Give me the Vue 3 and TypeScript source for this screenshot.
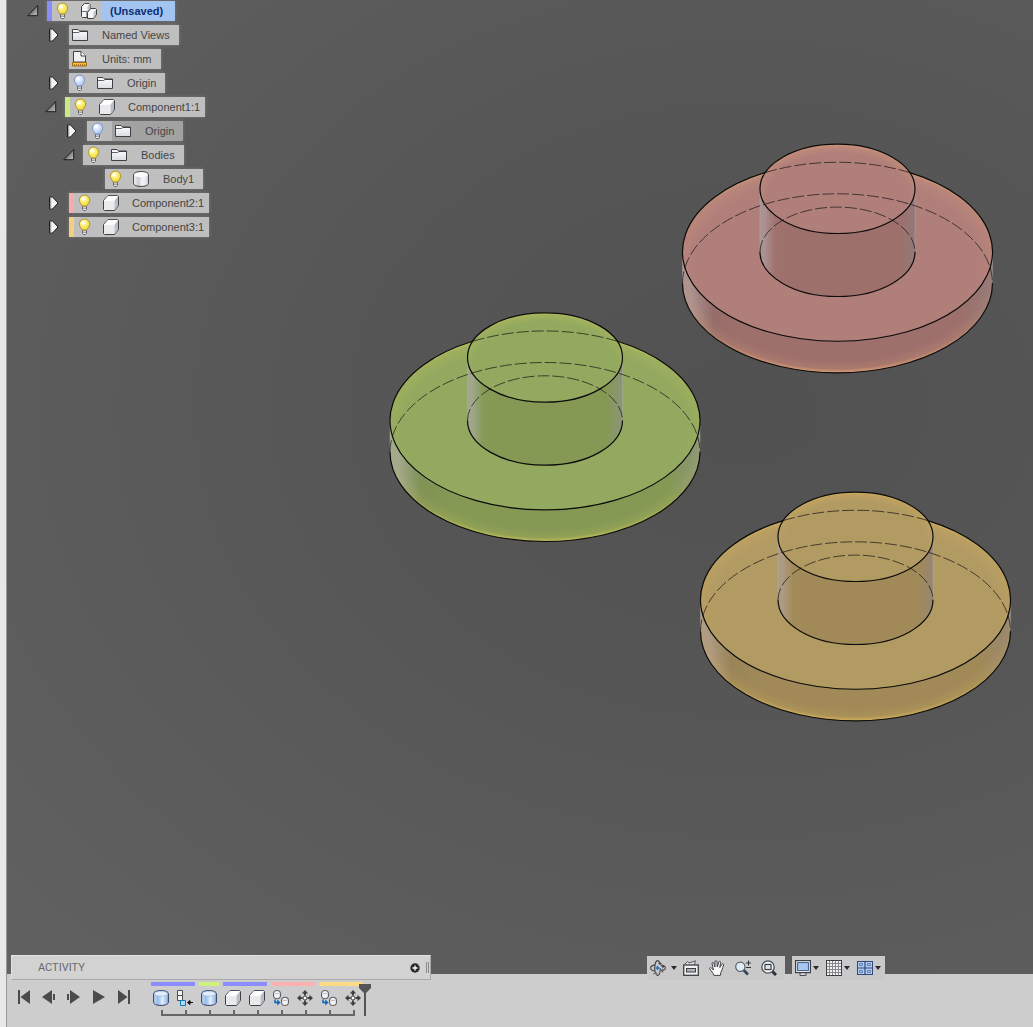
<script setup lang="ts">
import { ref } from 'vue'

interface TreeRow {
  label: string
  indent: number
  arrow?: 'open' | 'closed'
  stripe?: string
  bulb?: 'bulb-on' | 'bulb-off'
  icon: string
  kind?: 'root' | 'component' | 'dimmed'
}

const rows = ref<TreeRow[]>([
  { label: '(Unsaved)', indent: 19, arrow: 'open', stripe: 'violet', bulb: 'bulb-on', icon: 'assembly', kind: 'root' },
  { label: 'Named Views', indent: 41, arrow: 'closed', icon: 'folder' },
  { label: 'Units: mm', indent: 41, icon: 'units' },
  { label: 'Origin', indent: 41, arrow: 'closed', bulb: 'bulb-off', icon: 'folder' },
  { label: 'Component1:1', indent: 37, arrow: 'open', stripe: 'green', bulb: 'bulb-on', icon: 'cube', kind: 'component' },
  { label: 'Origin', indent: 59, arrow: 'closed', bulb: 'bulb-off', icon: 'folder', kind: 'dimmed' },
  { label: 'Bodies', indent: 55, arrow: 'open', bulb: 'bulb-on', icon: 'folder' },
  { label: 'Body1', indent: 77, bulb: 'bulb-on', icon: 'body' },
  { label: 'Component2:1', indent: 41, arrow: 'closed', stripe: 'pink', bulb: 'bulb-on', icon: 'cube', kind: 'component' },
  { label: 'Component3:1', indent: 41, arrow: 'closed', stripe: 'orange', bulb: 'bulb-on', icon: 'cube', kind: 'component' },
])

const parts = [
  { id: 'p1', x: 538, y: 420.5, face: '#93a95f', side: '#859955', light: '#a0a78c', shade: '#8b9478', glow: '#cfc95a' },
  { id: 'p2', x: 830.5, y: 251.8, face: '#b07f7a', side: '#9e706c', light: '#ab918f', shade: '#927977', glow: '#e8ab76' },
  { id: 'p3', x: 848.5, y: 599.8, face: '#b29a63', side: '#a18a58', light: '#ad9a82', shade: '#978670', glow: '#e2b95c' },
]

const playback = [
  { icon: 'to-start', label: 'Go to beginning' },
  { icon: 'step-back', label: 'Step back' },
  { icon: 'step-forward', label: 'Step forward' },
  { icon: 'play', label: 'Play' },
  { icon: 'to-end', label: 'Go to end' },
]

const groups = [
  { color: 'violet', features: ['extrude', 'new-component'] },
  { color: 'green', features: ['extrude'] },
  { color: 'violet', features: ['cube', 'cube'] },
  { color: 'pink', features: ['copy', 'move'] },
  { color: 'orange', features: ['copy', 'move'] },
]

const navTools = [
  { icon: 'orbit', label: 'Orbit', menu: true },
  { icon: 'look-at', label: 'Look at', menu: false },
  { icon: 'hand', label: 'Pan', menu: false },
  { icon: 'zoom', label: 'Zoom', menu: false },
  { icon: 'fit', label: 'Fit', menu: false },
]
const viewTools = [
  { icon: 'monitor', label: 'Display settings', menu: true },
  { icon: 'grid', label: 'Grid and snaps', menu: true },
  { icon: 'viewports', label: 'Viewports', menu: true },
]
</script>

<template>
  <div class="app">
    <svg class="sprites" width="0" height="0" aria-hidden="true">
      <defs>
        <radialGradient id="g-on" cx=".4" cy=".35" r=".65">
          <stop offset="0" stop-color="#fffde0" /><stop offset=".45" stop-color="#fcef78" /><stop offset="1" stop-color="#f2d83a" />
        </radialGradient>
        <radialGradient id="g-off" cx=".4" cy=".35" r=".65">
          <stop offset="0" stop-color="#ffffff" /><stop offset=".5" stop-color="#d3e1fb" /><stop offset="1" stop-color="#a9c3f0" />
        </radialGradient>
        <linearGradient id="g-folder" x1="0" y1="0" x2="0" y2="1">
          <stop offset="0" stop-color="#ffffff" /><stop offset="1" stop-color="#d9dce0" />
        </linearGradient>
        <linearGradient id="g-white"><stop offset="0" stop-color="#fff" /><stop offset=".3" stop-color="#c9cdd3" /><stop offset=".6" stop-color="#f6f6f8" /><stop offset="1" stop-color="#d8dbe0" /></linearGradient>
        <linearGradient id="g-blue"><stop offset="0" stop-color="#c3d9f5" /><stop offset=".3" stop-color="#9abde9" /><stop offset=".6" stop-color="#e2effc" /><stop offset="1" stop-color="#8aafe0" /></linearGradient>
        <linearGradient id="g-tri" x1="0" y1="0" x2="1" y2="1"><stop offset="0" stop-color="#3c3c3c" /><stop offset="1" stop-color="#c4c4c4" /></linearGradient>
      </defs>

      <symbol id="open" viewBox="0 0 21 14">
        <path d="M1.800 11.700 11.700 1.500V11.700Z" fill="url(#g-tri)" stroke="#1c1c1c" />
      </symbol>
      <symbol id="closed" viewBox="0 0 21 14">
        <path d="M1.500 1H4.500L10 7 4.500 13H1.500Z" fill="#f4f4f4" stroke="#1f1f1f" />
        <path d="M2.700 1.500V12.500" stroke="#8f8f8f" />
      </symbol>
      <symbol id="bulb-on" viewBox="0 0 20 20">
        <path d="M8.500 13h4v3.500l-1 1h-2l-1-1z" fill="#e9ebef" stroke="#5b6170" />
        <path d="M8.500 15.200h4" stroke="#7b8190" />
        <path d="M10.500 2a5.200 5.200 0 0 1 5.200 5.200c0 2.500-2 3.600-2.800 5.800H8.100C7.300 10.800 5.300 9.700 5.300 7.200A5.200 5.200 0 0 1 10.500 2z" fill="url(#g-on)" stroke="#b1942c" />
        <circle cx="9" cy="5.800" r="1.700" fill="#fff" opacity=".9" />
      </symbol>
      <symbol id="bulb-off" viewBox="0 0 20 20">
        <path d="M8.500 13h4v3.500l-1 1h-2l-1-1z" fill="#e9ebef" stroke="#5b6170" />
        <path d="M8.500 15.200h4" stroke="#7b8190" />
        <path d="M10.500 2a5.200 5.200 0 0 1 5.200 5.200c0 2.500-2 3.600-2.800 5.800H8.100C7.300 10.800 5.300 9.700 5.300 7.200A5.200 5.200 0 0 1 10.500 2z" fill="url(#g-off)" stroke="#7f93c0" />
        <circle cx="9" cy="5.800" r="1.700" fill="#fff" opacity=".9" />
      </symbol>
      <symbol id="folder" viewBox="0 0 16 16">
        <path d="M.5 13.500V2.500h5.500L7.500 4H15.500v9.500z" fill="url(#g-folder)" stroke="#3c4148" />
        <path d="M1 5.500H6.500L8 4.500" fill="none" stroke="#5d6269" />
        <path d="M8 4.500h7" stroke="#3c4148" />
      </symbol>
      <symbol id="units" viewBox="0 0 16 16">
        <path d="M1.500 11V.5H9L13.500 5v6z" fill="#eef0f2" stroke="#3c4148" />
        <path d="M9 .5V5h4.500" fill="#fff" stroke="#3c4148" />
        <path d="M.5 11.500h14v3.500H.5z" fill="#f5c04a" stroke="#a86c10" />
        <path d="M2.500 13v2M4.500 13v2M6.500 13v2M8.500 13v2M10.500 13v2M12.500 13v2" stroke="#a86c10" stroke-width=".8" />
      </symbol>
      <symbol id="cube" viewBox="0 0 16 16">
        <path d="M.5 5.500 5 .6H14.500l1 1V10.500L11.500 15.500H1.500l-1-1z" fill="#f7f7f8" stroke="#3c4148" />
        <path d="M11.500 5.500 15 1.200V10.500L11.500 15z" fill="#b9bdc4" />
        <path d="M1 5.500 5 1.100h9.600l-3.300 4.400z" fill="#fff" />
        <path d="M1 6H11v9H1.500L1 14.500z" fill="#e9eaec" />
      </symbol>
      <symbol id="assembly" viewBox="0 0 16 16">
        <path d="M.5 3.500 3.500.5H8l1 1V6.500L6 9.500V14.500H1.500l-1-1z" fill="#f4f5f6" stroke="#3c4148" />
        <path d="M6.500 9.500 9.500 5.500H14.500l1 1V11.500L12.500 15.500H6.500z" fill="#f4f5f6" stroke="#3c4148" />
        <path d="M1 8.500h5" stroke="#6a6f77" />
        <path d="M6.500 3.500 8.500 1.500V6L6.500 8.500zM12.500 9.500 15 6.800V11.300L12.500 14.800z" fill="#bfc3c9" />
      </symbol>
      <symbol id="body" viewBox="0 0 16 16">
        <path d="M.6 4C.6 1.800 3.500.6 8 .6s7.400 1.200 7.400 3.400v8c0 2.200-2.900 3.400-7.400 3.400S.6 14.200.6 12z" fill="url(#g-white)" stroke="#3c4148" />
        <ellipse cx="8" cy="3.700" rx="6.600" ry="2.400" fill="#fbfbfc" />
      </symbol>
      <symbol id="extrude" viewBox="0 0 16 16">
        <path d="M.6 4C.6 1.800 3.500.6 8 .6s7.400 1.200 7.400 3.400v8c0 2.200-2.900 3.400-7.400 3.400S.6 14.200.6 12z" fill="url(#g-blue)" stroke="#2d3f63" />
        <ellipse cx="8" cy="3.700" rx="6.600" ry="2.400" fill="#e2eefb" stroke="#9ab4d9" stroke-width=".6" />
      </symbol>
      <symbol id="new-component" viewBox="0 0 16 16">
        <path d="M.5.5h5v5h-5zM.5 5.500h5v5h-5z" fill="#f4f4f5" stroke="#494d54" />
        <path d="M3.500 10.500h5v5h-5z" fill="#a9dcf6" stroke="#1577b8" />
        <path d="M11 12.500h5M13 10.500l-2.500 2 2.500 2z" fill="#111" stroke="#111" />
      </symbol>
      <symbol id="copy" viewBox="0 0 16 16">
        <rect x=".6" y=".6" width="6.800" height="8" rx="2.600" fill="#f3f3f4" stroke="#494d54" />
        <path d="M1.500 3c1.500 1 3.500 1 5 0" fill="none" stroke="#a3a7ad" stroke-width=".8" />
        <rect x="8.600" y="7.400" width="6.800" height="8" rx="2.600" fill="#f3f3f4" stroke="#494d54" />
        <path d="M9.500 9.800c1.500 1 3.500 1 5 0" fill="none" stroke="#a3a7ad" stroke-width=".8" />
        <path d="M2 9.500v3H5" fill="none" stroke="#0b67b8" stroke-width="1.500" />
        <path d="M4.200 9.600 7.600 12.500 4.200 15.400z" fill="#0b67b8" />
      </symbol>
      <symbol id="move" viewBox="0 0 16 16">
        <path d="M8 0 11.200 3.500H4.800zM8 16l3.200-3.500H4.800zM0 8l3.500-3.200v6.400zM16 8l-3.500-3.200v6.400z" fill="#3e4045" />
        <path d="M8 2.500v3M8 10.500v3M2.500 8h3M10.500 8h3" stroke="#3e4045" stroke-width="2" />
        <circle cx="8" cy="8" r="2" fill="#fff" stroke="#3e4045" />
      </symbol>

      <symbol id="to-start" viewBox="0 0 14 14"><path d="M1 0h2v14H1zM13 0v14L3.500 7z" fill="#4b4b4b" /></symbol>
      <symbol id="step-back" viewBox="0 0 14 14"><path d="M10 0v14L0 7zM11 4h2v6h-2z" fill="#4b4b4b" /></symbol>
      <symbol id="step-forward" viewBox="0 0 14 14"><path d="M3 0v14l10-7zM0 4h2v6H0z" fill="#4b4b4b" /></symbol>
      <symbol id="play" viewBox="0 0 14 14"><path d="M1 0v14l12-7z" fill="#4b4b4b" /></symbol>
      <symbol id="to-end" viewBox="0 0 14 14"><path d="M11 0h2v14h-2zM1 0v14l9.500-7z" fill="#4b4b4b" /></symbol>

      <symbol id="orbit" viewBox="0 0 16 16">
        <path d="M5.500 11.200C2.500 10.800.6 9.600.6 8c0-1.600 1.900-2.700 4.700-3.100M10.500 4.900c2.900.3 4.900 1.500 4.900 3.100 0 1.200-1.200 2.100-3 2.600" fill="none" stroke="#44484f" stroke-width="1.100" />
        <path d="M5 11.500C4.800 10.500 4.700 9.300 4.700 8c0-4.200 1.200-7.400 2.800-7.400 1 0 1.900 1.100 2.400 3M10.300 8c0 4.200-1.200 7.400-2.800 7.400-.8 0-1.500-.7-2-2" fill="none" stroke="#44484f" stroke-width="1.100" />
        <path d="M13 8.800 11 10.700l2.300 1.500M3.600 14.200l1.600-1.900 2 1.300" fill="none" stroke="#44484f" />
        <path d="M7.500 6v4M5.500 8h4" stroke="#1873c4" stroke-width="1.400" />
        <path d="M8.500 3.500h3M10 2v3M11.500 6.500h3M13 5v3" stroke="#44484f" />
      </symbol>
      <symbol id="look-at" viewBox="0 0 16 16">
        <path d="M1.500 4.500 4.500 1.500 6 3 12.500.8 11.500 4.500" fill="#dcdcdc" stroke="#555a61" />
        <rect x=".7" y="5" width="14.600" height="10.300" fill="#f1f1f1" stroke="#3c4046" stroke-width="1.300" />
        <rect x="3.500" y="8.500" width="9" height="3.500" fill="#aeb3b9" stroke="#3c4046" />
      </symbol>
      <symbol id="hand" viewBox="0 0 16 16">
        <path d="M5 15.400C4.300 13 1.800 10.800.7 8.800c-.4-1 .9-1.600 1.900-.7L4.500 10 3 3.500c-.2-1.200 1.300-1.500 1.700-.4L6 7 6 1.600C6.100.3 7.800.3 7.900 1.600L8.300 7 9.800 2c.4-1.200 2-.8 1.800.4L10.800 7.500l2.200-3.300c.7-1 2-.3 1.600.8-1.300 3.500-1.500 5.500-2.800 7.500l-.4 2.900z" fill="#fafafa" stroke="#3e4248" />
      </symbol>
      <symbol id="zoom" viewBox="0 0 16 16">
        <path d="m8.500 10 4.500 4.500" stroke="#31445f" stroke-width="2.600" />
        <circle cx="5.300" cy="6.800" r="4.600" fill="#dcecf2" stroke="#5a6068" stroke-width="1.200" />
        <path d="M11 3h5M13.500.5v5M11 7.500h5" stroke="#333" />
      </symbol>
      <symbol id="fit" viewBox="0 0 16 16">
        <path d="m10.500 10.500 4.500 4.500" stroke="#2e3238" stroke-width="3" />
        <circle cx="7" cy="7" r="6.200" fill="#ececec" stroke="#4c5157" stroke-width="1.300" />
        <rect x="4" y="4.500" width="6" height="5" fill="#d9ecf0" stroke="#3d4248" stroke-width="1.200" />
      </symbol>
      <symbol id="monitor" viewBox="0 0 16 16">
        <path d="M5 12.500h6v3H5z" fill="#d8d8d8" stroke="#4a4d52" />
        <rect x=".6" y=".6" width="14.800" height="12" fill="#f4f4f4" stroke="#3c4046" stroke-width="1.200" />
        <rect x="2.600" y="2.600" width="10.800" height="8" fill="#a9c7ee" stroke="#3c5a8c" />
      </symbol>
      <symbol id="grid" viewBox="0 0 16 16">
        <rect x=".5" y=".5" width="15" height="15" fill="#f2f2f2" />
        <path d="M3.500 0v16M6.500 0v16M9.500 0v16M12.500 0v16M0 3.500h16M0 6.500h16M0 9.500h16M0 12.500h16" stroke="#85878b" />
        <rect x=".5" y=".5" width="15" height="15" fill="none" stroke="#3d3f43" />
      </symbol>
      <symbol id="viewports" viewBox="0 0 16 16">
        <rect x=".5" y="1.500" width="15" height="13" fill="#b3caee" stroke="#2f4b7c" />
        <path d="M2.500 3.500h3v2h-3zM10.500 3.500h3v2h-3zM2.500 10.500h3v2h-3zM10.500 10.500h3v2h-3z" fill="#a3bfe8" stroke="#6685b5" />
        <path d="M8 1.500v13M.5 8h15" stroke="#2f4b7c" stroke-width="1.200" />
      </symbol>
      <symbol id="caret" viewBox="0 0 6 4"><path d="M0 0h6L3 4z" fill="#2b2b2b" /></symbol>
    </svg>

    <main class="viewport">
      <svg class="scene" viewBox="0 0 1026 974" preserveAspectRatio="xMinYMin meet" role="img" aria-label="Three flanged bodies">
        <defs>
          <template v-for="p in parts" :key="p.id">
            <linearGradient :id="p.id + '-side'">
              <stop offset="0" :stop-color="p.light" />
              <stop offset=".03" :stop-color="p.light" />
              <stop offset=".1" :stop-color="p.side" stop-opacity=".9" />
              <stop offset=".2" :stop-color="p.side" />
              <stop offset=".9" :stop-color="p.side" />
              <stop offset="1" :stop-color="p.shade" />
            </linearGradient>
            <radialGradient :id="p.id + '-back'" gradientUnits="userSpaceOnUse" cx="0" cy="0" r="1" gradientTransform="translate(0 10) scale(167 99.500)">
              <stop offset=".86" :stop-color="p.glow" stop-opacity="0" />
              <stop offset=".96" :stop-color="p.glow" stop-opacity=".16" />
              <stop offset="1" :stop-color="p.glow" stop-opacity=".65" />
            </radialGradient>
            <radialGradient :id="p.id + '-front'" gradientUnits="userSpaceOnUse" cx="0" cy="0" r="1" gradientTransform="translate(0 21.500) scale(167 99.500)">
              <stop offset=".88" :stop-color="p.glow" stop-opacity="0" />
              <stop offset=".96" :stop-color="p.glow" stop-opacity=".16" />
              <stop offset="1" :stop-color="p.glow" stop-opacity=".8" />
            </radialGradient>
            <radialGradient :id="p.id + '-hub'" gradientUnits="userSpaceOnUse" cx="0" cy="0" r="1" gradientTransform="translate(0 -55) scale(87 53)">
              <stop offset=".82" :stop-color="p.glow" stop-opacity="0" />
              <stop offset=".94" :stop-color="p.glow" stop-opacity=".2" />
              <stop offset="1" :stop-color="p.glow" stop-opacity=".6" />
            </radialGradient>
          </template>
        </defs>
        <g v-for="p in parts" :key="p.id" :transform="`translate(${p.x} ${p.y})`">
          <path d="M-155 0A155 89.500 0 0 0 155 0V31.500A155 89.500 0 0 1-155 31.500Z" :fill="`url(#${p.id}-side)`" />
          <path d="M-155 0A155 89.500 0 0 0 155 0V31.500A155 89.500 0 0 1-155 31.500Z" :fill="`url(#${p.id}-front)`" />
          <ellipse rx="155" ry="89.500" :fill="p.face" />
          <ellipse rx="155" ry="89.500" :fill="`url(#${p.id}-back)`" />
          <path d="M-77.500-63A77.500 44.700 0 0 0 77.500-63V0A77.500 44.700 0 0 1-77.500 0Z" :fill="`url(#${p.id}-side)`" />
          <ellipse cy="-63" rx="77.500" ry="44.700" :fill="p.face" />
          <ellipse cy="-63" rx="77.500" ry="44.700" :fill="`url(#${p.id}-hub)`" />
          <path class="seam" d="M-77.500-58V-4M77.500-58V-4M-155 5V28M155 5V28" />
          <path class="hidden-edge" d="M-72.300-79.200A155 89.500 0 0 1 72.300-79.200M-155 31.500A155 89.500 0 0 1 155 31.500M-77.500 0A77.500 44.700 0 0 1 77.500 0" />
          <path class="edge" d="M-72.300-79.200A155 89.500 0 1 0 72.300-79.200M-155 31.500A155 89.500 0 0 0 155 31.500M-77.500 0A77.500 44.700 0 0 0 77.500 0" />
          <ellipse class="edge" cy="-63" rx="77.500" ry="44.700" />
        </g>
      </svg>

      <ul class="tree">
        <li v-for="(row, i) in rows" :key="i" class="row" :style="{ paddingLeft: row.indent + 'px' }">
          <button v-if="row.arrow" class="toggle" type="button" :aria-label="'Toggle ' + row.label">
            <svg width="21" height="14"><use :href="'#' + row.arrow" /></svg>
          </button>
          <span v-else class="toggle"></span>
          <div class="chip" :class="row.kind">
            <span v-if="row.stripe" class="stripe" :class="row.stripe"></span>
            <button v-if="row.bulb" class="bulb" type="button" :aria-label="'Show or hide ' + row.label">
              <svg width="20" height="20"><use :href="'#' + row.bulb" /></svg>
            </button>
            <svg class="glyph" :class="{ lone: !row.bulb }" width="16" height="16"><use :href="'#' + row.icon" /></svg>
            <span class="label">{{ row.label }}</span>
          </div>
        </li>
      </ul>
    </main>

    <footer class="dock">
      <section class="activity">
        <span class="title">ACTIVITY</span>
        <button class="add" type="button" aria-label="Expand activity">
          <svg width="10" height="10" viewBox="0 0 10 10"><circle cx="5" cy="5" r="4.700" fill="#2c2c2c" /><path d="M5 2.500v5M2.500 5h5" stroke="#fff" stroke-width="1.300" /></svg>
        </button>
        <span class="grip"></span>
      </section>

      <nav class="navbar" aria-label="View tools">
        <div v-for="(set, s) in [navTools, viewTools]" :key="s" class="toolset">
          <button v-for="t in set" :key="t.icon" class="tool" :class="{ menu: t.menu }" type="button" :aria-label="t.label">
            <svg width="16" height="16"><use :href="'#' + t.icon" /></svg>
            <svg v-if="t.menu" width="6" height="4"><use href="#caret" /></svg>
          </button>
        </div>
      </nav>

      <div class="playback">
        <button v-for="b in playback" :key="b.icon" type="button" :aria-label="b.label">
          <svg width="14" height="14"><use :href="'#' + b.icon" /></svg>
        </button>
      </div>

      <div class="timeline">
        <div class="groups">
          <div v-for="(g, i) in groups" :key="i" class="group">
            <span class="band" :class="g.color"></span>
            <div class="features">
              <button v-for="(f, j) in g.features" :key="j" type="button" :aria-label="f">
                <svg width="16" height="16"><use :href="'#' + f" /></svg>
              </button>
            </div>
          </div>
        </div>
        <div class="ruler"><i v-for="n in 9" :key="n"></i></div>
        <svg class="marker" width="12" height="32" viewBox="0 0 12 32"><path d="M0 0h12v4L7 9v23H5V9L0 4z" fill="#555" /></svg>
      </div>
    </footer>
  </div>
</template>

<style>
body {
  margin: 0;
  background: #e8e8e8;
}
</style>

<style scoped>
.app {
  display: flex;
  flex-direction: column;
  min-height: 100vh;
  box-sizing: border-box;
  margin-left: 6px;
  border-left: 1px solid #969696;
  font-family: "Liberation Sans", Arial, sans-serif;
  font-size: 11px;
  color: #454545;
}
button {
  display: flex;
  align-items: center;
  justify-content: center;
  padding: 0;
  border: 0;
  background: none;
}
svg {
  display: block;
  flex: none;
}
.sprites {
  position: absolute;
}
.viewport {
  position: relative;
  flex: 1;
  overflow: hidden;
  background: radial-gradient(ellipse 110% 90% at 72% 42%, #515151 0%, #565656 35%, #5e5e5e 75%, #636363 100%);
}
.scene {
  position: absolute;
  top: 0;
  left: 0;
  width: 100%;
}
.edge,
.hidden-edge,
.seam {
  fill: none;
  stroke: #0c0c0c;
  stroke-width: 1.200;
}
.hidden-edge {
  stroke: rgba(20, 20, 20, 0.7);
  stroke-width: 1;
  stroke-dasharray: 12 3;
}
.seam {
  stroke: rgba(185, 185, 200, 0.3);
}
.tree {
  position: relative;
  display: flex;
  flex-direction: column;
  align-items: flex-start;
  gap: 4px;
  margin: 0;
  padding: 1px 0 0;
  list-style: none;
}
.row {
  display: flex;
  align-items: center;
  height: 20px;
}
.toggle {
  width: 21px;
}
.chip {
  display: flex;
  align-items: center;
  height: 20px;
  background: #bfbfbf;
  box-shadow: 0 0 4px rgba(190, 190, 190, 0.3);
}
.chip.dimmed {
  background: linear-gradient(90deg, #bbbbbb 25px, #a2a2a2 25px);
}
.stripe {
  width: 5px;
  height: 20px;
}
.violet {
  background: #8a8cf8;
}
.green {
  background: #c8ec80;
}
.pink {
  background: #f6acac;
}
.orange {
  background: #f3cf82;
}
.glyph {
  margin: 0 6px 0 8px;
}
.glyph.lone {
  margin-left: 3px;
}
.root .glyph,
.component .glyph {
  margin: 0 5px 0 9px;
}
.label {
  padding: 0 9px 0 8px;
  line-height: 20px;
  white-space: nowrap;
}
.component .label {
  padding-right: 5px;
}
.root .label {
  padding-right: 12px;
  background: #a3c3f1;
  color: #0c2f75;
  font-weight: bold;
}
.dock {
  position: relative;
  display: flex;
  height: 53px;
  background: #cdcdcd;
}
.activity {
  position: absolute;
  top: -19px;
  left: 4px;
  display: flex;
  align-items: center;
  box-sizing: border-box;
  width: 420px;
  height: 25px;
  padding: 0 1px 0 26px;
  border: 1px solid #a9a9a9;
  border-top-color: #e2e2e2;
  border-left-color: #e2e2e2;
  background: #d2d2d2;
}
.title {
  flex: 1;
  font-family: Roboto, sans-serif;
  color: #6a6a6a;
}
.grip {
  width: 1px;
  height: 11px;
  margin-left: 6px;
  border: solid #8a8a8a;
  border-width: 0 1px;
}
.navbar {
  position: absolute;
  top: -18px;
  right: 148px;
  display: flex;
  gap: 7px;
}
.toolset {
  display: flex;
  height: 24px;
  background: #c9c9c9;
}
.toolset:first-child {
  padding-right: 3px;
}
.tool {
  width: 26px;
}
.tool.menu {
  justify-content: flex-start;
  width: 31px;
  gap: 2px;
  padding-left: 3px;
}
.toolset:first-child .menu {
  gap: 5px;
}
.playback {
  display: flex;
  align-items: flex-start;
  padding: 16px 15px 0 4px;
}
.playback button {
  width: 25px;
}
.timeline {
  position: relative;
  padding-top: 8px;
}
.groups {
  display: flex;
  gap: 4px;
}
.band {
  display: block;
  height: 4px;
}
.band.violet {
  background: #8b8dff;
}
.band.green {
  background: #cdf37e;
}
.band.pink {
  background: #ffb1b1;
}
.band.orange {
  background: #ffda85;
}
.features {
  display: flex;
  gap: 4px;
  padding-top: 4px;
}
.features button {
  width: 20px;
}
.ruler {
  display: flex;
  justify-content: space-between;
  height: 4px;
  margin: 4px 8px 0 10px;
  border-bottom: 2px solid #666;
}
.ruler i {
  width: 2px;
  background: #666;
}
.marker {
  position: absolute;
  top: 10px;
  right: -8px;
}
</style>
